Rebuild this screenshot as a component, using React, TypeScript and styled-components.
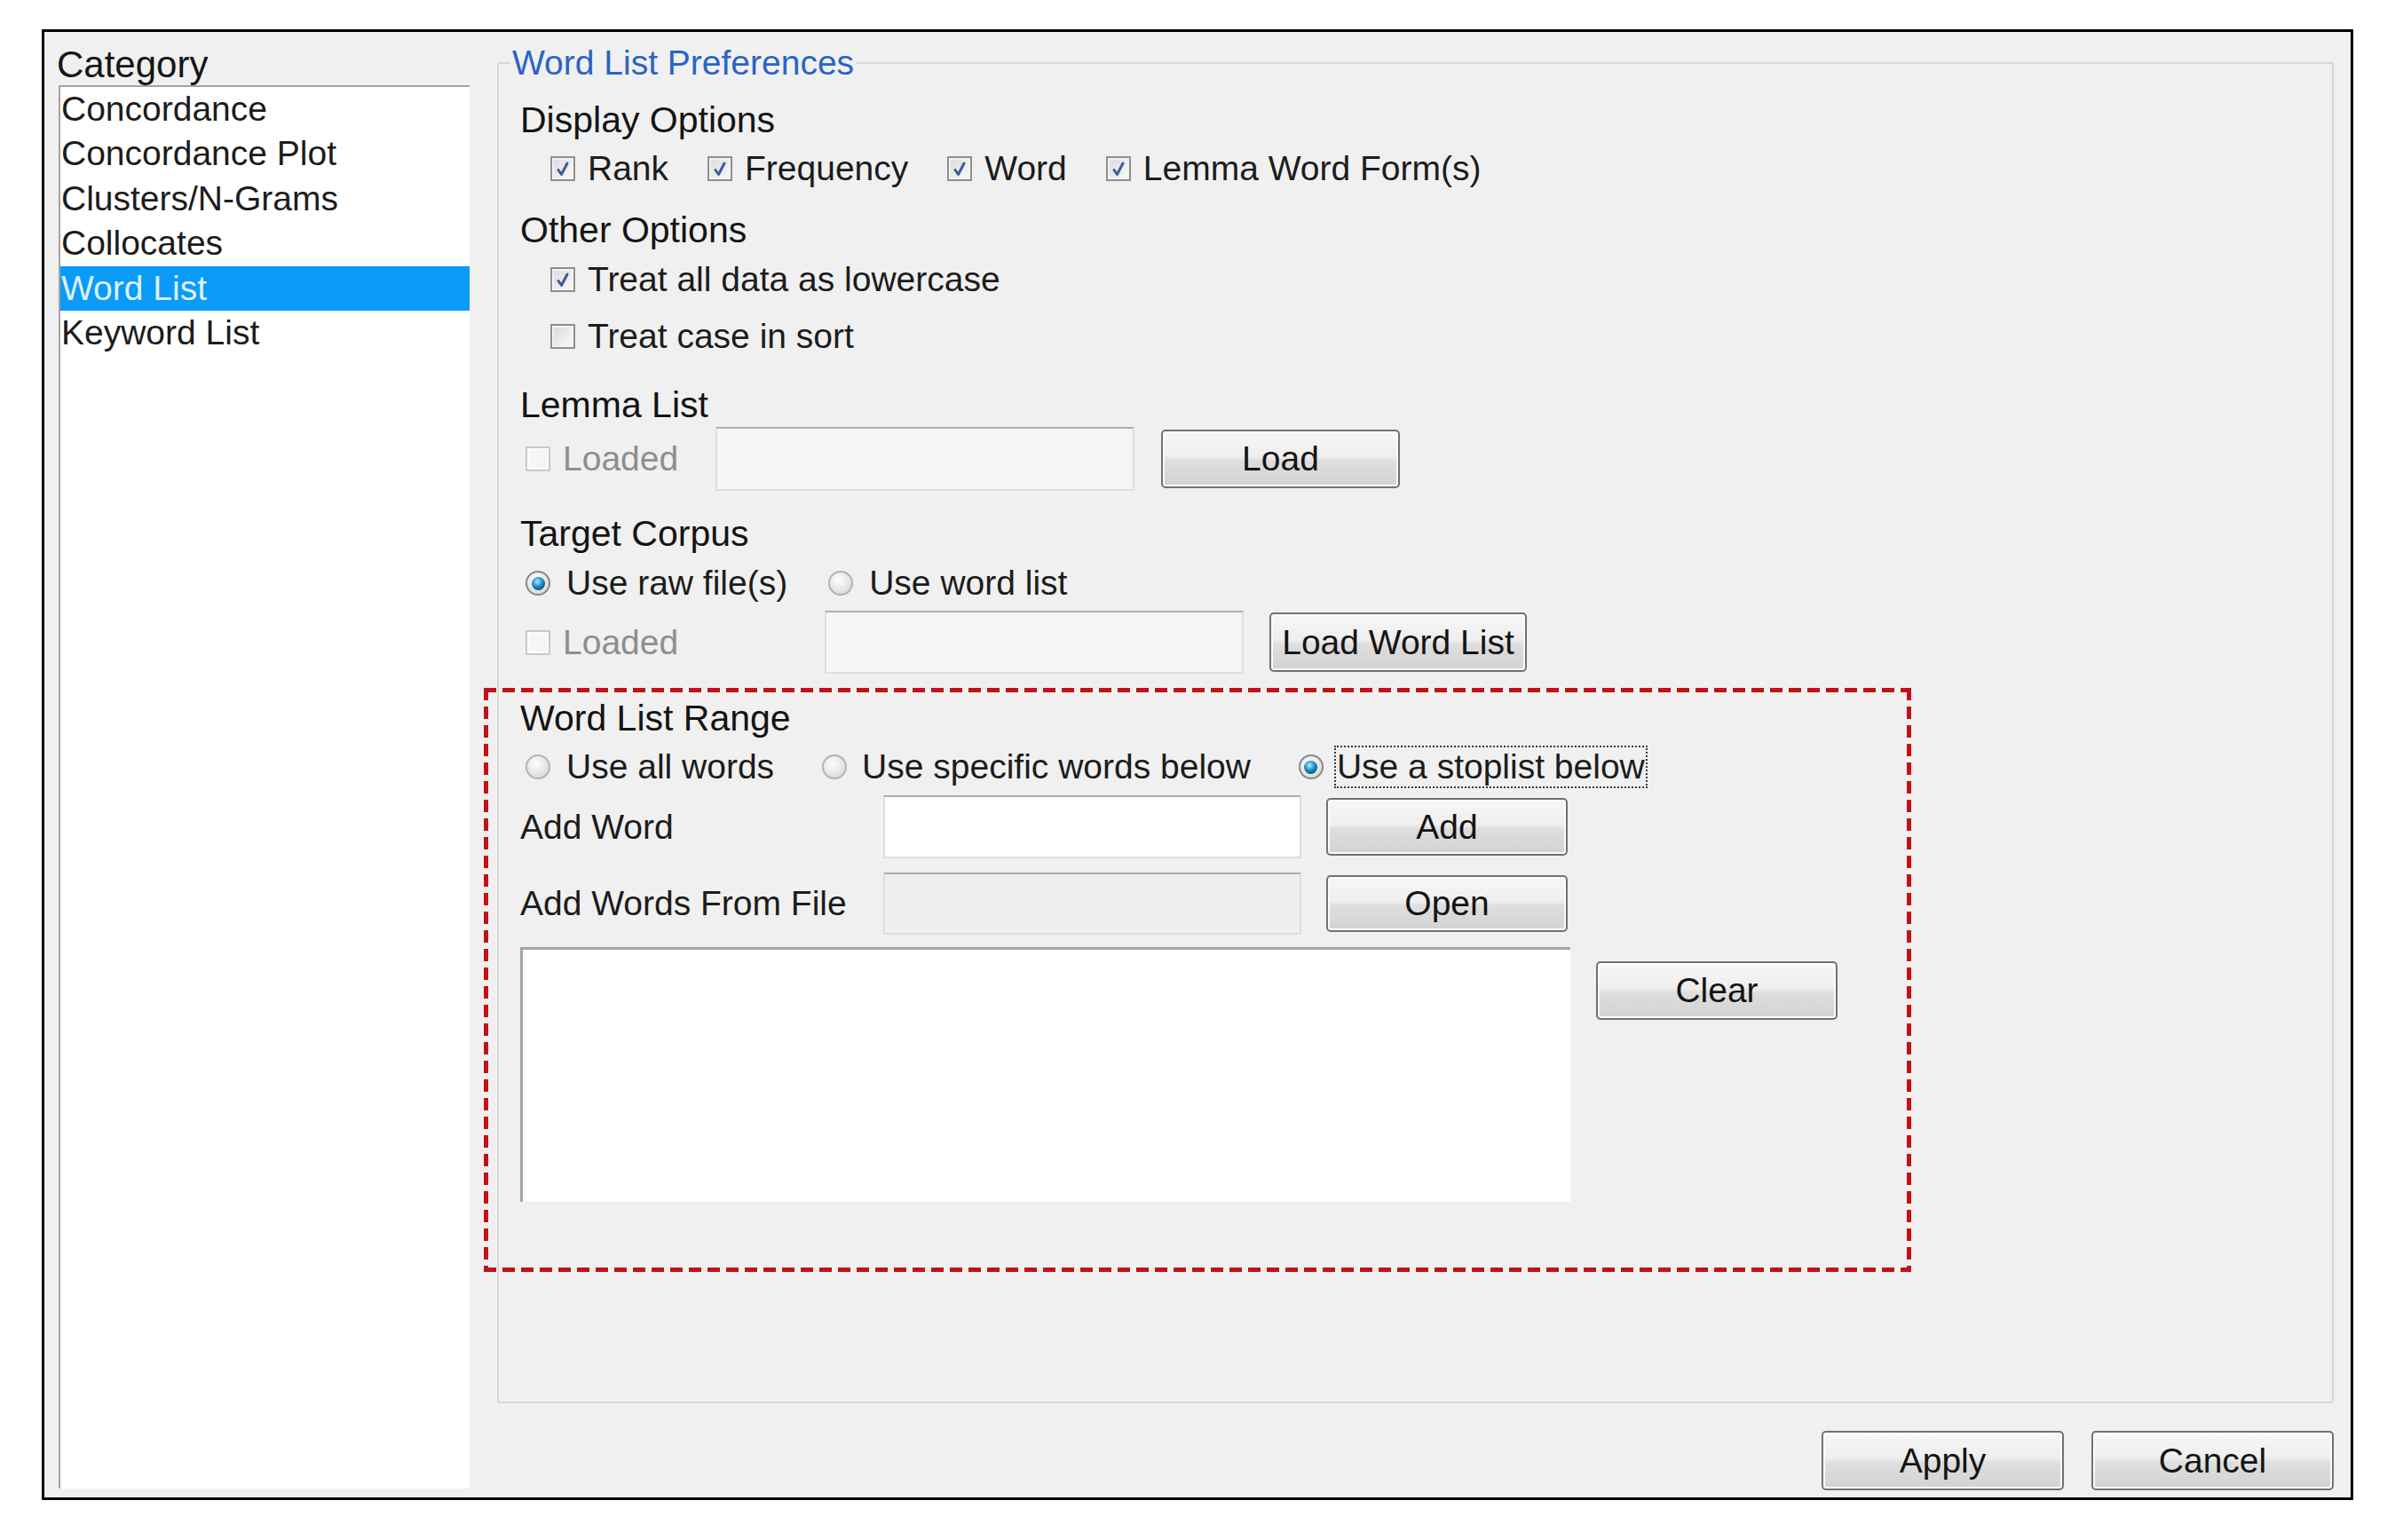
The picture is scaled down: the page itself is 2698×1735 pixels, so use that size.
import React from "react";
import styled, { createGlobalStyle } from "styled-components";

const Global = createGlobalStyle`
  html, body { margin: 0; padding: 0; background: #ffffff; }
  body { font-family: "Liberation Sans", Arial, sans-serif; color: #1a1a1a; }
  * { box-sizing: border-box; }
`;

const Page = styled.div`
  padding: 33px 47px 45px 47px;
`;

const Frame = styled.div`
  width: 2604px;
  height: 1657px;
  border: 3px solid #000;
  background: #f0f0f0;
  display: grid;
  grid-template-columns: 479px 1fr;
  column-gap: 31px;
`;

const LeftColumn = styled.div`
  display: flex;
  flex-direction: column;
  padding: 13px 0 10px 14px;
  min-height: 0;
`;

const CategoryLabel = styled.div`
  font-size: 42px;
  line-height: 47px;
  height: 47px;
  color: #161616;
`;

const CategoryList = styled.ul`
  flex: 1;
  margin: 0 0 0 2px;
  padding: 0;
  list-style: none;
  background: #ffffff;
  border-top: 2px solid #a3a3a3;
  border-left: 2px solid #a3a3a3;
`;

const CategoryItem = styled.li<{ $selected?: boolean }>`
  height: 50.4px;
  line-height: 50.4px;
  padding-left: 1px;
  font-size: 39px;
  white-space: nowrap;
  background: ${(p) => (p.$selected ? "#0a9bf6" : "transparent")};
  color: ${(p) => (p.$selected ? "#dcf2ff" : "#1c1c1c")};
`;

const RightColumn = styled.div`
  display: flex;
  flex-direction: column;
  padding: 12px 19px 8px 0;
  min-height: 0;
`;

const GroupBox = styled.fieldset`
  flex: 1;
  margin: 0;
  padding: 0;
  min-width: 0;
  border: 2px solid #d6d6d6;
  border-radius: 3px;
`;

const GroupTitle = styled.legend`
  margin-left: 12px;
  padding: 0 3px;
  font-size: 39px;
  line-height: 46px;
  color: #2a64c5;
`;

const GroupContent = styled.div`
  display: flex;
  flex-direction: column;
  padding: 16px 0 0 24px;
`;

const Heading = styled.div<{ $mt?: number }>`
  height: 50px;
  line-height: 50px;
  font-size: 41px;
  color: #141414;
  margin-top: ${(p) => p.$mt ?? 0}px;
  white-space: nowrap;
`;

const OptionRow = styled.div<{ $mt?: number; $indent?: number; $gap?: number }>`
  display: flex;
  align-items: center;
  height: 50px;
  margin-top: ${(p) => p.$mt ?? 0}px;
  padding-left: ${(p) => p.$indent ?? 34}px;
  gap: ${(p) => p.$gap ?? 44}px;
`;

const Option = styled.label<{ $gap?: number }>`
  display: inline-flex;
  align-items: center;
  gap: ${(p) => p.$gap ?? 14}px;
  font-size: 39px;
  white-space: nowrap;
`;

const OptionText = styled.span<{ $disabled?: boolean }>`
  color: ${(p) => (p.$disabled ? "#8e8e8e" : "#1c1c1c")};
  line-height: 44px;
`;

const FocusedText = styled(OptionText)`
  border: 2px dotted #3a3a3a;
  padding: 0 1px;
`;

const Box = styled.span<{ $disabled?: boolean }>`
  width: 28px;
  height: 28px;
  flex: none;
  display: inline-flex;
  align-items: center;
  justify-content: center;
  border: 2px solid ${(p) => (p.$disabled ? "#c9c9c9" : "#8f8f8f")};
  background: ${(p) =>
    p.$disabled
      ? "#f6f6f6"
      : "linear-gradient(135deg, #d9d9d9 0%, #ececec 55%, #fafafa 100%)"};
  box-shadow: inset 0 0 0 2px ${(p) => (p.$disabled ? "#fbfbfb" : "#f3f3f3")};
`;

const Radio = styled.span<{ $on?: boolean }>`
  width: 28px;
  height: 28px;
  flex: none;
  border-radius: 50%;
  display: inline-flex;
  align-items: center;
  justify-content: center;
  border: 2px solid ${(p) => (p.$on ? "#8a8a8a" : "#b4b4b4")};
  background: radial-gradient(circle at 40% 35%, #fdfdfd 0%, #e6e6e6 55%, #cfcfcf 100%);
`;

const RadioDot = styled.span`
  width: 15px;
  height: 15px;
  border-radius: 50%;
  background: radial-gradient(circle at 42% 35%, #b8ecff 0%, #2a9bd0 38%, #0d5a86 70%, #07324d 100%);
`;

const FieldRow = styled.div<{ $mt?: number; $h: number }>`
  display: flex;
  align-items: center;
  height: ${(p) => p.$h}px;
  margin-top: ${(p) => p.$mt ?? 0}px;
`;

const LabelCell = styled.div<{ $w: number; $indent?: number }>`
  width: ${(p) => p.$w}px;
  flex: none;
  padding-left: ${(p) => p.$indent ?? 0}px;
  font-size: 39px;
  color: #1c1c1c;
  white-space: nowrap;
  display: flex;
  align-items: center;
`;

const TextBox = styled.input<{ $w: number; $h: number; $bg: string }>`
  width: ${(p) => p.$w}px;
  height: ${(p) => p.$h}px;
  flex: none;
  margin: 0;
  padding: 0 8px;
  font: inherit;
  font-size: 39px;
  background: ${(p) => p.$bg};
  border: 2px solid #dcdfe4;
  border-top-color: #abadb3;
  outline: none;
`;

const PushButton = styled.button<{ $w: number; $h: number; $ml?: number; $mt?: number }>`
  width: ${(p) => p.$w}px;
  height: ${(p) => p.$h}px;
  flex: none;
  margin: ${(p) => p.$mt ?? 0}px 0 0 ${(p) => p.$ml ?? 0}px;
  padding: 0;
  font-family: inherit;
  font-size: 39px;
  color: #141414;
  border: 2px solid #727272;
  border-radius: 5px;
  background: linear-gradient(to bottom, #f7f7f7 0%, #eeeeee 46%, #dedede 54%, #d2d2d2 100%);
  box-shadow: inset 0 0 0 2px #fbfbfb;
  white-space: nowrap;
`;

const RangeSection = styled.section`
  margin: 16px 0 0 -41px;
  width: 1608px;
  padding: 9px 0 79px 41px;
  display: flex;
  flex-direction: column;
  background:
    repeating-linear-gradient(90deg, #c1121c 0 14px, transparent 14px 21px) top left / 100% 5px no-repeat,
    repeating-linear-gradient(90deg, #c1121c 0 14px, transparent 14px 21px) bottom left / 100% 5px no-repeat,
    repeating-linear-gradient(180deg, #c1121c 0 14px, transparent 14px 21px) top left / 5px 100% no-repeat,
    repeating-linear-gradient(180deg, #c1121c 0 14px, transparent 14px 21px) top right / 5px 100% no-repeat;
`;

const ListArea = styled.div`
  display: flex;
  align-items: flex-start;
  margin-top: 14px;
`;

const WordsBox = styled.textarea`
  width: 1183px;
  height: 287px;
  flex: none;
  margin: 0;
  resize: none;
  background: #ffffff;
  border: none;
  border-top: 3px solid #a6a6a6;
  border-left: 3px solid #a6a6a6;
  outline: none;
  font: inherit;
`;

const ButtonBar = styled.div`
  display: flex;
  justify-content: flex-end;
  gap: 31px;
  margin-top: 31px;
`;

function Check({ checked, disabled }: { checked?: boolean; disabled?: boolean }) {
  return (
    <Box $disabled={disabled}>
      {checked && (
        <svg width="24" height="24" viewBox="0 0 24 24">
          <path d="M7 13.5 L10.5 18.5 L17 6" fill="none" stroke="#3f5b9a" strokeWidth="3" strokeLinecap="round" strokeLinejoin="round" />
        </svg>
      )}
    </Box>
  );
}

function RadioButton({ on }: { on?: boolean }) {
  return <Radio $on={on}>{on && <RadioDot />}</Radio>;
}

const categories = [
  "Concordance",
  "Concordance Plot",
  "Clusters/N-Grams",
  "Collocates",
  "Word List",
  "Keyword List",
];

export default function App() {
  return (
    <>
      <Global />
      <Page>
        <Frame>
          <LeftColumn>
            <CategoryLabel>Category</CategoryLabel>
            <CategoryList>
              {categories.map((c) => (
                <CategoryItem key={c} $selected={c === "Word List"}>
                  {c}
                </CategoryItem>
              ))}
            </CategoryList>
          </LeftColumn>

          <RightColumn>
            <GroupBox>
              <GroupTitle>Word List Preferences</GroupTitle>
              <GroupContent>
                <Heading>Display Options</Heading>
                <OptionRow $mt={5}>
                  <Option><Check checked /><OptionText>Rank</OptionText></Option>
                  <Option><Check checked /><OptionText>Frequency</OptionText></Option>
                  <Option><Check checked /><OptionText>Word</OptionText></Option>
                  <Option><Check checked /><OptionText>Lemma Word Form(s)</OptionText></Option>
                </OptionRow>

                <Heading $mt={19}>Other Options</Heading>
                <OptionRow $mt={6}>
                  <Option><Check checked /><OptionText>Treat all data as lowercase</OptionText></Option>
                </OptionRow>
                <OptionRow $mt={14}>
                  <Option><Check /><OptionText>Treat case in sort</OptionText></Option>
                </OptionRow>

                <Heading $mt={27}>Lemma List</Heading>
                <FieldRow $h={72}>
                  <LabelCell $w={220} $indent={6}>
                    <Option><Check disabled /><OptionText $disabled>Loaded</OptionText></Option>
                  </LabelCell>
                  <TextBox $w={472} $h={72} $bg="#f5f5f5" readOnly />
                  <PushButton $w={269} $h={66} $ml={30}>Load</PushButton>
                </FieldRow>

                <Heading $mt={23}>Target Corpus</Heading>
                <OptionRow $mt={6} $indent={6} $gap={46}>
                  <Option $gap={18}><RadioButton on /><OptionText>Use raw file(s)</OptionText></Option>
                  <Option $gap={18}><RadioButton /><OptionText>Use word list</OptionText></Option>
                </OptionRow>
                <FieldRow $h={71} $mt={6}>
                  <LabelCell $w={343} $indent={6}>
                    <Option><Check disabled /><OptionText $disabled>Loaded</OptionText></Option>
                  </LabelCell>
                  <TextBox $w={472} $h={71} $bg="#f5f5f5" readOnly />
                  <PushButton $w={290} $h={67} $ml={29}>Load Word List</PushButton>
                </FieldRow>

                <RangeSection>
                  <Heading>Word List Range</Heading>
                  <OptionRow $mt={5} $indent={6} $gap={54}>
                    <Option $gap={18}><RadioButton /><OptionText>Use all words</OptionText></Option>
                    <Option $gap={17}><RadioButton /><OptionText>Use specific words below</OptionText></Option>
                    <Option $gap={12}><RadioButton on /><FocusedText>Use a stoplist below</FocusedText></Option>
                  </OptionRow>
                  <FieldRow $h={71} $mt={7}>
                    <LabelCell $w={409}>Add Word</LabelCell>
                    <TextBox $w={471} $h={71} $bg="#ffffff" />
                    <PushButton $w={272} $h={65} $ml={28}>Add</PushButton>
                  </FieldRow>
                  <FieldRow $h={70} $mt={16}>
                    <LabelCell $w={409}>Add Words From File</LabelCell>
                    <TextBox $w={471} $h={70} $bg="#efefef" readOnly />
                    <PushButton $w={272} $h={64} $ml={28}>Open</PushButton>
                  </FieldRow>
                  <ListArea>
                    <WordsBox />
                    <PushButton $w={272} $h={66} $ml={29} $mt={16}>Clear</PushButton>
                  </ListArea>
                </RangeSection>
              </GroupContent>
            </GroupBox>
            <ButtonBar>
              <PushButton $w={273} $h={67}>Apply</PushButton>
              <PushButton $w={273} $h={67}>Cancel</PushButton>
            </ButtonBar>
          </RightColumn>
        </Frame>
      </Page>
    </>
  );
}
